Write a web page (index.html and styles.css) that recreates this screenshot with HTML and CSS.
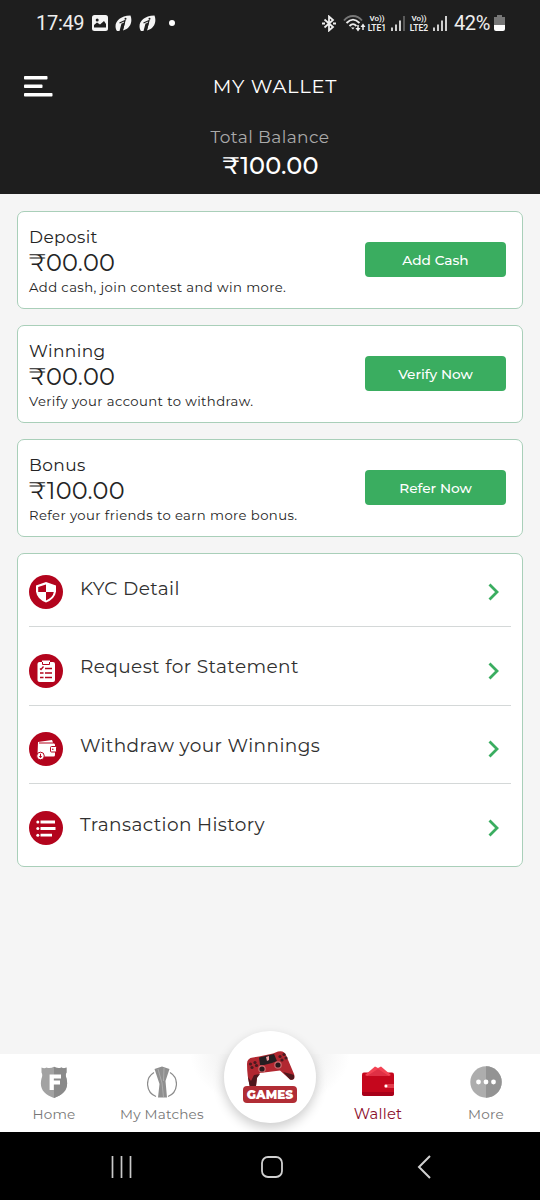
FILE: index.html
```
<!DOCTYPE html>
<html lang="en">
<head>
<meta charset="utf-8">
<title>My Wallet</title>
<link rel="stylesheet" href="styles.css">
</head>
<body>
<div class="screen">
  <header class="header">
    <div class="status">
      <div class="status-left">
        <span class="clock">17:49</span>
        <svg class="ic-photo" width="16" height="16" viewBox="0 0 16 16"><rect width="16" height="16" rx="2.5" fill="#f4f4f4"/><circle cx="5.2" cy="5" r="1.5" fill="#1e1e1e"/><path d="M2 12.500V10l3-2.500 3 2L12 6l2 3v3.500z" fill="#1e1e1e"/></svg>
        <svg class="ic-app" width="17" height="17" viewBox="0 0 17 17"><path d="M2 16C-2 10 2 1 15.500 .5C18 7 15 14 8 15.500L10 7.500L6.500 8.500L4.500 16z" fill="#f4f4f4"/><path d="M4.500 8l5.500-2.500L7 16" fill="none" stroke="#1e1e1e" stroke-width="1.200"/><circle cx="10.500" cy="3.700" r="1" fill="#1e1e1e"/></svg>
        <svg class="ic-app" width="17" height="17" viewBox="0 0 17 17"><path d="M2 16C-2 10 2 1 15.500 .5C18 7 15 14 8 15.500L10 7.500L6.500 8.500L4.500 16z" fill="#f4f4f4"/><path d="M4.500 8l5.500-2.500L7 16" fill="none" stroke="#1e1e1e" stroke-width="1.200"/><circle cx="10.500" cy="3.700" r="1" fill="#1e1e1e"/></svg>
        <span class="dot"></span>
      </div>
      <div class="status-right">
        <svg width="14" height="17" viewBox="0 0 14 17" fill="none" stroke="#eee" stroke-width="1.800"><path d="M2.500 4.500l8.500 7.500-4 3.500V1.500l4 3.500-8.500 7.500"/><path d="M0 8.500h3M11 8.500H14"/></svg>
        <svg class="ic-wifi" width="23" height="17" viewBox="0 0 23 17" fill="none" stroke-width="1.900"><path d="M1 5.500C6-.5 14-.5 19 5.500" stroke="#777"/><path d="M3.500 8C8 3.500 12 3.500 16.500 8M6.500 11c2.500-2.500 4.500-2.500 7 0" stroke="#eee"/><path d="M8 12.500h3.500L10 14.500z" fill="#eee"/><path d="M15 10v4M20 15v-4" stroke="#eee" stroke-width="1.500"/><path d="M12.500 13h5L15 16.500zM17.500 12h5L20 8.500z" fill="#eee"/></svg>
        <span class="lte"><b>Vo))</b><b class="lte-net">LTE1</b></span>
        <svg class="bars" width="14" height="15" viewBox="0 0 14 15"><path d="M1 11.500V15M5 8.500V15M9 4.500V15" stroke="#eee" stroke-width="1.700"/><path d="M13 0V15" stroke="#666" stroke-width="1.700"/></svg>
        <span class="lte lte-two"><b>Vo))</b><b class="lte-net">LTE2</b></span>
        <svg class="bars" width="14" height="15" viewBox="0 0 14 15"><path d="M1 11.500V15M5 8.500V15M9 4.500V15M13 0V15" stroke="#eee" stroke-width="1.700"/></svg>
        <span class="percent">42%</span>
        <svg width="11" height="16" viewBox="0 0 11 16"><path d="M3 0h5v2h3v8H0V2h3z" fill="#777"/><path d="M0 10h11v4q0 2-2 2H2q-2 0-2-2z" fill="#fff"/></svg>
      </div>
    </div>
    <div class="title-row">
      <svg class="menu" width="29" height="21" viewBox="0 0 29 21" fill="#fff"><rect width="23.500" height="3.500" rx=".8"/><rect y="8.600" width="18.500" height="3.500" rx=".8"/><rect y="17" width="28.500" height="3.500" rx=".8"/></svg>
      <h1 class="title">MY WALLET</h1>
    </div>
    <p class="balance-label">Total Balance</p>
    <p class="balance">₹100.00</p>
  </header>

  <main class="content">
    <section class="card">
      <div><h2 class="name">Deposit</h2><p class="amount">₹00.00</p><p class="hint">Add cash, join contest and win more.</p></div>
      <button class="button">Add Cash</button>
    </section>
    <section class="card">
      <div><h2 class="name">Winning</h2><p class="amount">₹00.00</p><p class="hint">Verify your account to withdraw.</p></div>
      <button class="button">Verify Now</button>
    </section>
    <section class="card">
      <div><h2 class="name">Bonus</h2><p class="amount">₹100.00</p><p class="hint">Refer your friends to earn more bonus.</p></div>
      <button class="button">Refer Now</button>
    </section>

    <nav class="list">
      <a class="row">
        <svg width="34" height="34" viewBox="0 0 34 34"><circle cx="17" cy="17" r="17" fill="#b3041d"/><path d="M17 7l10 3.500v6Q26 24 17 27.500Q8 24 7 16.500v-6z" fill="#fff"/><path d="M17 9.500V17H9.200v-5zM17 17h7.800Q24 22.500 17 25.500z" fill="#b3041d"/></svg>
        <span class="row-label">KYC Detail</span>
        <svg class="chevron" width="12" height="18" viewBox="0 0 12 18"><path d="M1.500 1.500L9 9l-7.500 7.500" fill="none" stroke="#3aad60" stroke-width="2.800"/></svg>
      </a>
      <a class="row">
        <svg width="34" height="34" viewBox="0 0 34 34"><circle cx="17" cy="17" r="17" fill="#b3041d"/><rect x="8.500" y="8" width="17.500" height="20" rx="2" fill="#fff"/><path d="M13 6.500h8v3.500h-8z" fill="#fff"/><path d="M13.500 8v2.500h7V8" fill="none" stroke="#b3041d"/><path d="M11 14.500l1 1 2.500-3M16 14.500h7M11 19h3.500M16 19h7M11 23.500h3.500M16 23.500h7" fill="none" stroke="#b3041d" stroke-width="1.300"/></svg>
        <span class="row-label">Request for Statement</span>
        <svg class="chevron" width="12" height="18" viewBox="0 0 12 18"><path d="M1.500 1.500L9 9l-7.500 7.500" fill="none" stroke="#3aad60" stroke-width="2.800"/></svg>
      </a>
      <a class="row">
        <svg width="34" height="34" viewBox="0 0 34 34"><circle cx="17" cy="17" r="17" fill="#b3041d"/><path d="M9 10l14-2 1 2.500H10v1h15q1 0 1 1.500v10q0 1.500-1.500 1.500H10q-1.500 0-1.500-1.500z" fill="#fff"/><rect x="21.500" y="14.500" width="6" height="5.500" rx="1" fill="#fff" stroke="#b3041d"/><circle cx="23.800" cy="17.200" r=".8" fill="#b3041d"/><circle cx="11.500" cy="24" r="3.800" fill="#fff" stroke="#b3041d"/><path d="M11.500 21.800v3.500M10.200 24.200l1.300 1.500 1.300-1.500" stroke="#b3041d" fill="none"/></svg>
        <span class="row-label">Withdraw your Winnings</span>
        <svg class="chevron" width="12" height="18" viewBox="0 0 12 18"><path d="M1.500 1.500L9 9l-7.500 7.500" fill="none" stroke="#3aad60" stroke-width="2.800"/></svg>
      </a>
      <a class="row">
        <svg width="34" height="34" viewBox="0 0 34 34"><circle cx="17" cy="17" r="17" fill="#b3041d"/><path d="M11.500 11H26M11.500 17.500H26.500M11.500 24.200H23" stroke="#fff" stroke-width="2.800"/><g fill="#fff"><circle cx="8.800" cy="11" r="1.500"/><circle cx="8.800" cy="17.500" r="1.500"/><circle cx="8.800" cy="24.200" r="1.500"/></g></svg>
        <span class="row-label">Transaction History</span>
        <svg class="chevron" width="12" height="18" viewBox="0 0 12 18"><path d="M1.500 1.500L9 9l-7.500 7.500" fill="none" stroke="#3aad60" stroke-width="2.800"/></svg>
      </a>
    </nav>
  </main>

  <footer class="tabs">
    <a class="tab">
      <svg width="28" height="33" viewBox="0 0 28 33"><path d="M1.500 1.500q3 1.500 5 0Q10 3 14 .8Q18 3 21.500 1.500q2 1.500 5 0v5q-1.500 2.500 0 6C29 23 24 28 14 32C4 28-1 23 1.500 12.500q1.500-3.500 0-6z" fill="#a2a2a2"/><path d="M14 .8Q18 3 21.500 1.500q2 1.500 5 0v5q-1.500 2.500 0 6C29 23 24 28 14 32z" fill="#8a8a8a"/><path d="M11.700 24V10.500H21M11.700 16.500H20" stroke="#fff" stroke-width="4.200" fill="none"/></svg>
      <span class="tab-label">Home</span>
    </a>
    <a class="tab">
      <svg width="30" height="33" viewBox="0 0 30 33"><path d="M7 6.500a13.500 13.500 0 0 0 2 24M23 6.500a13.500 13.500 0 0 1-2 24" fill="none" stroke="#8b8b8b" stroke-width="1.200"/><path d="M7.500 3L15 .5 22.500 3 18.500 15 20 31.500H11L12.500 18z" fill="#8f8f8f"/><path d="M11 3l4 14 1.500 14M17 2l-.5 13" stroke="#b4b4b4" stroke-width=".8" fill="none"/></svg>
      <span class="tab-label">My Matches</span>
    </a>
    <a class="games">
      <svg width="56" height="54" viewBox="0 0 56 54">
        <path d="M5 15Q5 9 11 8.500L17 7.500 31 4.500 36 2.500Q42 1 44 6l8 19q2 7-4 5.500l-10-9-8 1-12 1.500-3 4-1 9H8Q5 28 5 15z" fill="#b12730"/>
        <path d="M6 28l1.500 9H14l1-8 3-4-6 1-3 6zM41 23l8 2 3 1q1 6-4 4.500z" fill="#4e171c"/>
        <path d="M17 8.500L32 5l3 7-5 2-8 2-4 0z" fill="#241e21"/><path d="M24 8l3-1v4l-2 1z" fill="#f0a0a4"/>
        <g fill="#29191c" stroke="#cf6a6e" stroke-width="1.200"><circle cx="20" cy="20" r="3.200"/><circle cx="36" cy="16" r="3.200"/></g>
        <g fill="#4a1a20"><circle cx="8.500" cy="15" r="1.600"/><circle cx="13" cy="13.500" r="1.600"/><circle cx="10" cy="18.500" r="1.600"/><circle cx="14.500" cy="16.500" r="1.600"/><circle cx="38" cy="7.500" r="1.600"/><circle cx="42" cy="5.500" r="1.600"/><circle cx="40" cy="11" r="1.600"/><circle cx="44" cy="9" r="1.600"/></g>
      </svg>
      <span class="games-label">GAMES</span>
    </a>
    <a class="tab wallet">
      <svg width="32" height="30" viewBox="0 0 32 30"><rect y="6.500" width="32" height="23" rx="2" fill="#c5071d"/><path d="M3 9L13 .5l3 1.500 3-1.500L29 9l-2 1H5z" fill="#f34354"/><path d="M5 10l11-7 11 7z" fill="#df3045"/><path d="M0 26h32v2q0 2-2 2H2q-2 0-2-2z" fill="#a80019"/><path d="M23 18h9v4h-9q-2-2 0-4z" fill="#e33c4c"/><circle cx="24" cy="20" r="1.500" fill="#fff"/></svg>
      <span class="tab-label">Wallet</span>
    </a>
    <a class="tab">
      <svg width="32" height="32" viewBox="0 0 32 32"><circle cx="16" cy="16" r="15.700" fill="#adadad"/><path d="M16 .3a15.700 15.700 0 0 1 0 31.400z" fill="#939393"/><g fill="#fff"><circle cx="8.500" cy="16" r="2.400"/><circle cx="16" cy="16" r="2.400"/><circle cx="23.500" cy="16" r="2.400"/></g></svg>
      <span class="tab-label">More</span>
    </a>
  </footer>

  <div class="system">
    <svg width="22" height="22" viewBox="0 0 22 22"><path d="M1.500 0v22M10.500 0v22M19.500 0v22" stroke="#c9c9c9" stroke-width="1.700"/></svg>
    <svg class="home-key" width="24" height="24" viewBox="0 0 24 24"><rect x="2" y="2" width="20" height="20" rx="6" fill="none" stroke="#d0d0d0" stroke-width="1.800"/></svg>
    <svg width="14" height="24" viewBox="0 0 14 24"><path d="M13 1L2 12l11 11" fill="none" stroke="#d0d0d0" stroke-width="2"/></svg>
  </div>
</div>
</body>
</html>
```
FILE: styles.css
```
* { box-sizing: border-box; }
body, h1, h2, p { margin: 0; font-weight: 400; }
body { background: #f5f5f5; color: #242424; font-family: Montserrat, Inter, "Noto Sans", sans-serif; }
svg { display: block; flex: none; }
.screen { width: 540px; height: 1200px; display: flex; flex-direction: column; }

.header { height: 194px; background: #1e1e1e; color: #fff; text-align: center; }
.status { height: 46px; padding: 0 35px 0 36px; display: flex; justify-content: space-between; align-items: center; font-family: Roboto, sans-serif; color: #eee; }
.status-left, .status-right { display: flex; align-items: center; }
.clock { font-size: 20px; letter-spacing: -0.3px; width: 56px; text-align: left; }
.ic-app { margin-left: 7px; }
.dot { width: 6px; height: 6px; border-radius: 50%; background: #fff; margin-left: 13px; }
.ic-wifi { margin-left: 7px; }
.lte { margin-left: 1px; width: 20px; display: flex; flex-direction: column; align-items: center; font-size: 8px; line-height: 9px; white-space: nowrap; letter-spacing: -0.1px; }
.lte b { font-weight: 600; }
.lte .lte-net { font-size: 8.5px; line-height: 10px; letter-spacing: 0; }
.lte-two { margin-left: 4px; }
.bars { margin-left: 4px; }
.percent { font-size: 20px; letter-spacing: -0.4px; width: 35px; margin: 0 5px 0 7px; }
.title-row { display: grid; grid-template-columns: 60px 1fr 60px; align-items: center; height: 80px; }
.menu { margin-left: 24px; }
.title { font-size: 19.5px; letter-spacing: 0.7px; margin-left: 10px; }
.balance-label { color: #aaa; font-size: 17px; line-height: 22px; letter-spacing: 0.4px; }
.balance { font-size: 24px; line-height: 36px; font-weight: 500; letter-spacing: 0.1px; margin-left: 1px; }

.content { flex: 1; padding: 17px; display: flex; flex-direction: column; gap: 16px; }
.card { height: 98px; background: #fff; border: 1px solid #a9cfb9; border-radius: 7px; padding: 13px 16px 0 11px; display: flex; justify-content: space-between; }
.name { font-size: 17px; line-height: 24px; letter-spacing: 0.4px; }
.amount { font-size: 24px; line-height: 28px; letter-spacing: 0.2px; }
.hint { font-size: 13.2px; line-height: 20px; letter-spacing: 0.4px; }
.button { width: 141px; height: 35px; margin-top: 17px; border: 0; border-radius: 4px; background: #3aad60; color: #fff; font: inherit; font-size: 13.7px; font-weight: 500; letter-spacing: 0; }

.list { height: 314px; background: #fff; border: 1px solid #a9cfb9; border-radius: 7px; padding: 0 11px; }
.row { height: 78.500px; padding: 10px 11px 0 0; display: flex; align-items: center; border-bottom: 1px solid #d4d8d8; }
.row:first-child { height: 73px; padding-top: 4px; }
.row:last-child { border-bottom: 0; height: 83px; padding-top: 5px; }
.row-label { flex: 1; margin: -8px 0 0 17px; font-size: 18.5px; letter-spacing: 0.39px; color: #303030; }

.tabs { height: 78px; background: radial-gradient(ellipse 80px 55px at 50% 0, #f3f3f3 60%, #fff 100%); display: grid; grid-template-columns: repeat(5, 108px); }
.tab { display: flex; flex-direction: column; align-items: center; padding-top: 12px; }
.tab-label { margin-top: auto; margin-bottom: 8px; font-size: 13.6px; line-height: 20px; letter-spacing: 0.2px; color: #777; }
.wallet .tab-label { color: #8c0e2b; font-size: 14.8px; }
.games { width: 92px; height: 92px; margin: -23px 0 0 8px; border-radius: 50%; background: #fff; box-shadow: 0 5px 12px #0003; display: flex; flex-direction: column; align-items: center; padding-top: 18px; }
.games-label { margin-top: -17px; width: 54px; height: 17px; border-radius: 4px; background: #b12d35; color: #fff; font-size: 12px; line-height: 17px; font-weight: 900; text-align: center; z-index: 1; }
.system { height: 68px; background: #000; display: flex; align-items: center; justify-content: space-between; padding: 2px 109px 0 111px; }
.home-key { margin-right: 6px; }
```
